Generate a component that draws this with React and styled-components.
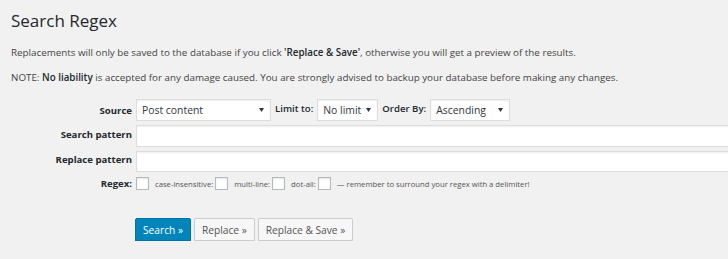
import React from "react";
import styled, { createGlobalStyle } from "styled-components";

const Global = createGlobalStyle`
  html, body { margin: 0; padding: 0; background: #f1f1f1; overflow: hidden; }
  body { font-family: "Open Sans", "Noto Sans", sans-serif; color: #444; }
`;

const Wrap = styled.div`
  padding: 0 0 0 11px;
  width: 760px;
`;

const Title = styled.h1`
  margin: 0;
  padding: 10px 0 0;
  font-size: 17px;
  font-weight: 400;
  line-height: 22px;
  color: #23282d;
`;

const Note = styled.p`
  margin: 15px 0 0;
  font-size: 9.8px;
  line-height: 12px;
  color: #444;
  & + & { margin-top: 13px; }
  b { font-weight: 600; color: #23282d; }
`;

const Form = styled.div`
  display: grid;
  grid-template-columns: 121px 1fr;
  column-gap: 4px;
  row-gap: 4px;
  margin-top: 15px;
  align-items: center;
`;

const Label = styled.div`
  text-align: right;
  font-weight: 700;
  font-size: 9.6px;
  color: #23282d;
  padding-bottom: ${(p) => (p.$top ? "4px" : "0")};
`;

const Inline = styled.div`
  display: flex;
  align-items: center;
  gap: 4px;
`;

const InlineLabel = styled.span`
  font-weight: 600;
  font-size: 9.6px;
  color: #23282d;
  padding-bottom: 3px;
  margin-right: ${(p) => p.$mr || 0}px;
`;

const SelectBox = styled.div`
  position: relative;
  width: ${(p) => p.$w}px;
  height: 22px;
  box-sizing: border-box;
  background: #fff;
  border: 1px solid #ddd;
  box-shadow: inset 0 1px 2px rgba(0, 0, 0, 0.07);
  display: flex;
  align-items: center;
  padding-left: 5px;
  font-size: 10.4px;
  color: #32373c;
`;

const Arrow = styled.svg`
  position: absolute;
  right: 6px;
  top: 8px;
`;

const TextInput = styled.input`
  width: 620px;
  height: ${(p) => p.$h || 22}px;
  box-sizing: border-box;
  border: 1px solid #ddd;
  box-shadow: inset 0 1px 2px rgba(0, 0, 0, 0.07);
  background: #fff;
  outline: none;
  margin: 0;
`;

const CheckRow = styled.div`
  display: flex;
  align-items: center;
  padding-top: 1px;
`;

const Check = styled.span`
  width: 13px;
  height: 13px;
  box-sizing: border-box;
  background: #fff;
  border: 1px solid #b4b9be;
  box-shadow: inset 0 1px 2px rgba(0, 0, 0, 0.1);
  display: inline-block;
  margin-right: 6px;
`;

const Small = styled.span`
  font-size: 7.7px;
  color: #555;
  margin-right: 2px;
`;

const Buttons = styled.div`
  display: flex;
  gap: 3px;
  margin: 28px 0 0 124px;
`;

const Button = styled.button`
  height: 23px;
  box-sizing: border-box;
  padding: 0 7px;
  font-family: inherit;
  font-size: 10.2px;
  border-radius: 2px;
  border: 1px solid ${(p) => (p.$primary ? "#0073aa" : "#ccc")};
  background: ${(p) => (p.$primary ? "#0085ba" : "#f7f7f7")};
  color: ${(p) => (p.$primary ? "#fff" : "#555")};
  box-shadow: ${(p) => (p.$primary ? "0 1px 0 #006799" : "0 1px 0 #ccc")};
  cursor: pointer;
`;

const Select = ({ w, value }) => (
  <SelectBox $w={w}>
    {value}
    <Arrow width="5" height="4" viewBox="0 0 5 4">
      <path d="M0 0 H5 L2.5 4 Z" fill="#32373c" />
    </Arrow>
  </SelectBox>
);

export default function App() {
  return (
    <>
      <Global />
      <Wrap>
        <Title>Search Regex</Title>
        <Note>
          Replacements will only be saved to the database if you click <b>'Replace &amp; Save'</b>, otherwise you will get a preview of the results.
        </Note>
        <Note>
          NOTE: <b>No liability</b> is accepted for any damage caused. You are strongly advised to backup your database before making any changes.
        </Note>
        <Form>
          <Label>Source</Label>
          <Inline>
            <Select w={135} value="Post content" />
            <InlineLabel>Limit to:</InlineLabel>
            <Select w={61} value="No limit" />
            <InlineLabel>Order By:</InlineLabel>
            <Select w={80} value="Ascending" />
          </Inline>
          <Label $top>Search pattern</Label>
          <TextInput />
          <Label $top>Replace pattern</Label>
          <TextInput $h={21} />
          <Label>Regex:</Label>
          <CheckRow>
            <Check />
            <Small>case-insensitive:</Small>
            <Check />
            <Small>multi-line:</Small>
            <Check />
            <Small>dot-all:</Small>
            <Check />
            <Small>— remember to surround your regex with a delimiter!</Small>
          </CheckRow>
        </Form>
        <Buttons>
          <Button $primary>Search »</Button>
          <Button>Replace »</Button>
          <Button>Replace &amp; Save »</Button>
        </Buttons>
      </Wrap>
    </>
  );
}
